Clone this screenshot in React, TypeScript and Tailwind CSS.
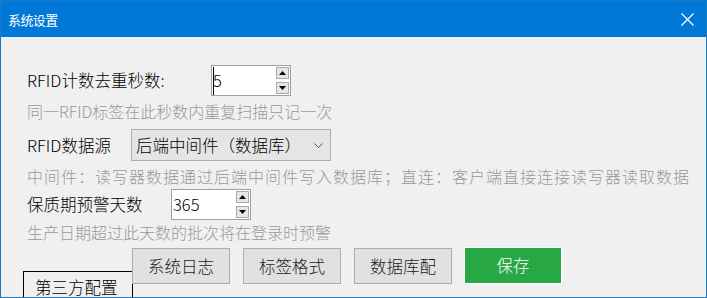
import React from "react";

const font = { fontFamily: '"Noto Sans CJK SC", "Noto Sans", sans-serif' };

function Spinner({ value, width, cursor }: { value: string; width: string; cursor?: boolean }) {
  return (
    <div className={`relative flex h-[31px] ${width} items-center border border-[#a0a0a0] bg-white`}>
      {cursor && <div className="absolute left-[1px] top-[1px] h-[28px] w-px bg-black" />}
      <span className="pl-[1px] text-[16.5px] leading-none text-black">{value}</span>
      <div className="absolute right-[1px] top-[1px] flex flex-col gap-[3px]">
        <div className="flex h-[12px] w-[13px] items-center justify-center border border-[#a9a9a9] bg-[#e6e6e6]">
          <svg width="7" height="4" viewBox="0 0 7 4"><polygon points="3.5,0 7,4 0,4" fill="#000" /></svg>
        </div>
        <div className="flex h-[12px] w-[13px] items-center justify-center border border-[#a9a9a9] bg-[#e6e6e6]">
          <svg width="7" height="4" viewBox="0 0 7 4"><polygon points="0,0 7,0 3.5,4" fill="#000" /></svg>
        </div>
      </div>
    </div>
  );
}

function Btn({ children }: { children: React.ReactNode }) {
  return (
    <div className="flex h-[36px] w-[98px] items-center justify-center border border-[#adadad] bg-[#e1e1e1] text-[16.5px] text-[#1a1a1a]">
      {children}
    </div>
  );
}

export default function App() {
  return (
    <div style={font} className="relative h-[298px] w-[707px] overflow-hidden border border-[#1979ca] bg-[#f0f0f0] font-light">
      <div className="flex h-[36px] items-center justify-between bg-[#0078d7] pl-[7px] pr-[12px]">
        <span className="mt-[2px] text-[13px] font-normal tracking-[-0.6px] text-white">系统设置</span>
        <svg width="13" height="13" viewBox="0 0 13 13" className="mt-[1px]">
          <path d="M0.5 0.5 L12.5 12.5 M12.5 0.5 L0.5 12.5" stroke="#fff" strokeWidth="1.2" fill="none" />
        </svg>
      </div>

      <div className="flex flex-col pl-[26px] pt-[28px]">
        <div className="flex h-[31px] items-center">
          <span className="w-[184px] text-[16.5px] text-black">RFID计数去重秒数:</span>
          <Spinner value="5" width="w-[80px]" cursor />
        </div>
        <div className="mt-[4px] h-[22px] text-[16px] leading-[22px] text-[#999999]">同一RFID标签在此秒数内重复扫描只记一次</div>

        <div className="mt-[7px] flex h-[32px] items-center">
          <span className="w-[104px] text-[16.5px] text-black">RFID数据源</span>
          <div className="flex h-[32px] w-[200px] items-center justify-between border border-[#adadad] bg-[#e5e5e5] pl-[4px] pr-[7px]">
            <span className="text-[16.5px] text-black">后端中间件（数据库）</span>
            <svg width="9" height="5" viewBox="0 0 9 5"><polyline points="0.5,0.5 4.5,4.5 8.5,0.5" stroke="#555" strokeWidth="1" fill="none" /></svg>
          </div>
        </div>
        <div className="mt-[4px] h-[22px] whitespace-nowrap text-[16px] leading-[22px] tracking-[1px] text-[#999999]">中间件：读写器数据通过后端中间件写入数据库；直连：客户端直接连接读写器读取数据</div>

        <div className="mt-[2px] flex h-[31px] items-center">
          <span className="w-[144px] text-[16.5px] text-black">保质期预警天数</span>
          <Spinner value="365" width="w-[80px]" />
        </div>
        <div className="mt-[1px] h-[22px] text-[16px] leading-[22px] text-[#999999]">生产日期超过此天数的批次将在登录时预警</div>

        <div className="-ml-[4px] mt-[4px] flex items-start">
          <div className="mt-[24px] h-[40px] w-[110px] border border-black pl-[11px] pt-[4px] text-[16.5px] leading-[22px] text-black">第三方配置</div>
          <div className="mt-[1px] flex gap-[13px]">
            <div className="-ml-px"><Btn>系统日志</Btn></div>
            <Btn>标签格式</Btn>
            <Btn>数据库配</Btn>
          </div>
          <div className="ml-[12px] flex h-[37px] w-[98px] items-center justify-center border border-white bg-[#28a745] text-[16.5px] text-white">保存</div>
        </div>
      </div>
    </div>
  );
}
